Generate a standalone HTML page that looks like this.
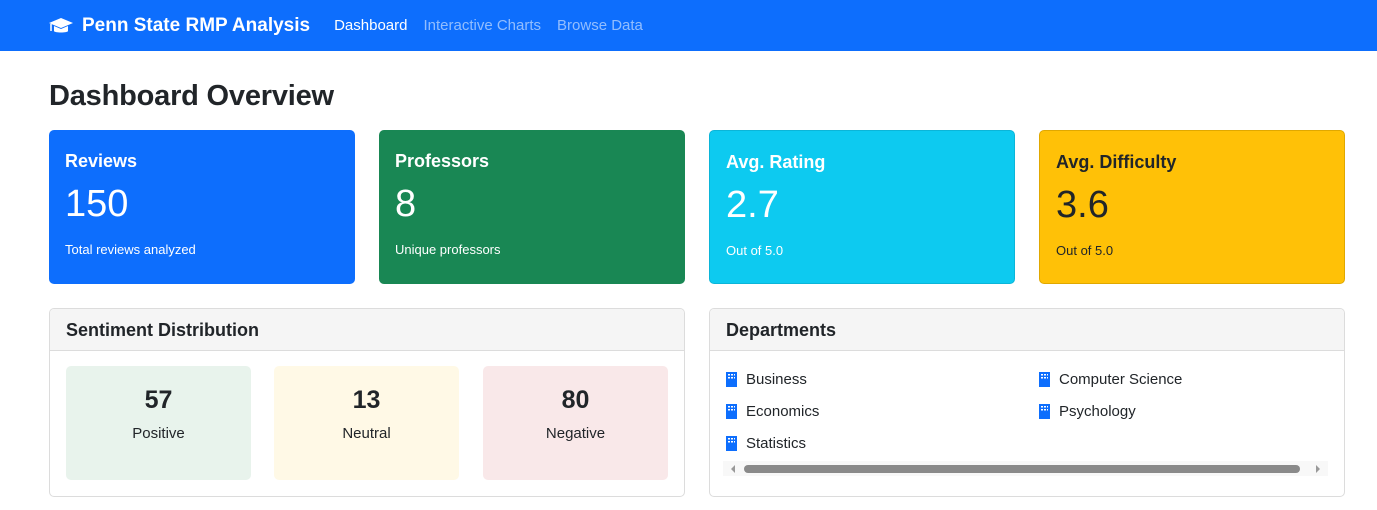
<!DOCTYPE html>
<html><head><style>
*{box-sizing:border-box;margin:0;padding:0}
body{width:1377px;height:510px;background:#fff;font-family:"Liberation Sans",sans-serif;color:#212529;overflow:hidden;position:relative}
.nav{height:51px;background:#0d6efd;display:flex;align-items:center;padding-left:48px}
.brand{color:#fff;font-weight:bold;font-size:19px;display:flex;align-items:center;margin-right:24px}
.nav a{font-size:15px;margin-right:16px;color:rgba(255,255,255,.55)}
.nav a.act{color:#fff}
h1{position:absolute;left:49px;top:80px;font-size:29px;font-weight:bold;letter-spacing:-0.2px}
.card{position:absolute;top:130px;width:306px;height:154px;border-radius:5px;padding:20px 16px;color:#fff}
.card h3{font-size:18px;font-weight:bold;margin-top:1px}
.card .n{font-size:38px;font-weight:300;margin-top:11px;height:50px}
.card .s{font-size:13px;margin-top:9px}
.panel{position:absolute;top:308px;width:636px;height:189px;border:1px solid #dcdcdc;border-radius:5px;overflow:hidden}
.ph{height:42px;background:#f5f5f5;border-bottom:1px solid #dcdcdc;padding:11px 16px;font-size:18px;font-weight:bold}
.sb{position:absolute;top:57px;width:185px;height:114px;border-radius:5px;text-align:center}
.sb b{display:block;font-size:25px;margin-top:20px}
.sb span{display:block;font-size:15px;margin-top:10px}
.dep{position:absolute;font-size:15px;display:flex;align-items:center}
.ic{width:11px;height:15px;background:#0d6efd;margin-right:9px;position:relative}
.ic:before{content:"";position:absolute;left:2px;top:2px;width:7px;height:6px;background:repeating-linear-gradient(90deg,#fff 0 2px,transparent 2px 3px);-webkit-mask:repeating-linear-gradient(#000 0 1.5px,transparent 1.5px 3px)}
</style></head><body>
<div class="nav"><div class="brand"><svg width="26" height="20" viewBox="0 0 26 20" style="margin-right:8px"><path d="M13 2L1 7l12 5 12-5z" fill="#fff"/><path d="M6 10v5c0 2 14 2 14 0v-5l-7 3z" fill="#fff"/><path d="M3 8v7" stroke="#fff" stroke-width="1.5"/></svg>Penn State RMP Analysis</div>
<a class="act">Dashboard</a><a>Interactive Charts</a><a>Browse Data</a></div>
<h1>Dashboard Overview</h1>
<div class="card" style="left:49px;background:#0d6efd"><h3>Reviews</h3><div class="n">150</div><div class="s">Total reviews analyzed</div></div>
<div class="card" style="left:379px;background:#198754"><h3>Professors</h3><div class="n">8</div><div class="s">Unique professors</div></div>
<div class="card" style="left:709px;background:#0dcaf0;border:1px solid #0bb5d8"><h3>Avg. Rating</h3><div class="n">2.7</div><div class="s">Out of 5.0</div></div>
<div class="card" style="left:1039px;background:#ffc107;color:#212529;border:1px solid #e0a800"><h3>Avg. Difficulty</h3><div class="n">3.6</div><div class="s">Out of 5.0</div></div>
<div class="panel" style="left:49px"><div class="ph">Sentiment Distribution</div>
<div class="sb" style="left:16px;background:#e8f3ec"><b>57</b><span>Positive</span></div>
<div class="sb" style="left:224px;background:#fff9e6"><b>13</b><span>Neutral</span></div>
<div class="sb" style="left:433px;background:#f9e8e9"><b>80</b><span>Negative</span></div>
</div>
<div class="panel" style="left:709px"><div class="ph">Departments</div>
<div class="dep" style="left:16px;top:62px"><i class="ic"></i>Business</div>
<div class="dep" style="left:329px;top:62px"><i class="ic"></i>Computer Science</div>
<div class="dep" style="left:16px;top:94px"><i class="ic"></i>Economics</div>
<div class="dep" style="left:329px;top:94px"><i class="ic"></i>Psychology</div>
<div class="dep" style="left:16px;top:126px"><i class="ic"></i>Statistics</div>
<div style="position:absolute;left:13px;top:152px;width:605px;height:15px;background:#f8f8f8">
<div style="position:absolute;left:8px;top:4px;border:4px solid transparent;border-right-color:#999;border-left:0;width:0;height:0"></div>
<div style="position:absolute;left:21px;top:4px;width:556px;height:8px;border-radius:4px;background:#8a8a8a"></div>
<div style="position:absolute;left:593px;top:4px;border:4px solid transparent;border-left-color:#999;border-right:0;width:0;height:0"></div>
</div>
</div>
</body></html>
